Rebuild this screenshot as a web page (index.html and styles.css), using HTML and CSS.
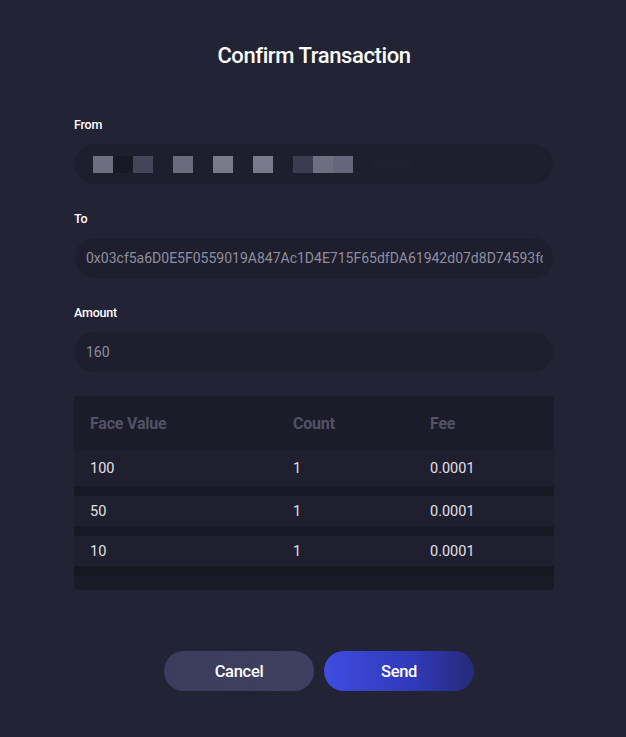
FILE: index.html
```html
<!DOCTYPE html>
<html>
<head>
<meta charset="utf-8">
<link rel="stylesheet" href="styles.css">
</head>
<body>
<div class="dialog">
  <h1 class="title">Confirm Transaction</h1>
  <div class="field">
    <div class="label">From</div>
    <div class="input blurred">
      <span class="px" style="background:#6e6e80;width:20px"></span><span class="px" style="background:#191926;width:20px"></span><span class="px" style="background:#45455a;width:20px"></span><span class="gap" style="width:20px"></span><span class="px" style="background:#6a6a7c;width:20px"></span><span class="gap" style="width:20px"></span><span class="px" style="background:#7a7a8c;width:20px"></span><span class="gap" style="width:20px"></span><span class="px" style="background:#7a7a8c;width:20px"></span><span class="gap" style="width:20px"></span><span class="px" style="background:#3c3c50;width:20px"></span><span class="px" style="background:#6e6e80;width:20px"></span><span class="px" style="background:#66667a;width:20px"></span><span class="gap" style="width:20px"></span><span class="px" style="background:#1f1f2e;width:40px"></span>
    </div>
  </div>
  <div class="field">
    <div class="label">To</div>
    <div class="input"><span class="value">0x03cf5a6D0E5F0559019A847Ac1D4E715F65dfDA61942d07d8D74593fd2</span></div>
  </div>
  <div class="field">
    <div class="label">Amount</div>
    <div class="input"><span class="value">160</span></div>
  </div>
  <div class="table">
    <div class="row head">
      <div class="c1">Face Value</div><div class="c2">Count</div><div class="c3">Fee</div>
    </div>
    <div class="row first">
      <div class="c1">100</div><div class="c2">1</div><div class="c3">0.0001</div>
    </div>
    <div class="row">
      <div class="c1">50</div><div class="c2">1</div><div class="c3">0.0001</div>
    </div>
    <div class="row">
      <div class="c1">10</div><div class="c2">1</div><div class="c3">0.0001</div>
    </div>
    <div class="foot"></div>
  </div>
  <div class="actions">
    <button class="btn cancel">Cancel</button>
    <button class="btn send">Send</button>
  </div>
</div>
</body>
</html>
```
FILE: styles.css
```css
html, body {
  margin: 0;
  padding: 0;
  background: #232336;
  height: 100%;
}
body {
  font-family: Roboto, "Liberation Sans", sans-serif;
  color: #ffffff;
}
.dialog {
  width: 480px;
  margin-left: 74px;
  padding-top: 41px;
  display: flex;
  flex-direction: column;
}
.title {
  margin: 0;
  font-size: 22px;
  font-weight: 500;
  text-align: center;
  line-height: 30px;
  letter-spacing: -0.4px;
}
.field {
  display: flex;
  flex-direction: column;
}
.field:first-of-type { margin-top: 46px; }
.field + .field { margin-top: 27px; }
.label {
  font-size: 12.5px;
  font-weight: 500;
  line-height: 16px;
  letter-spacing: -0.2px;
}
.input {
  margin-top: 11px;
  margin-left: 1px;
  width: 478px;
  height: 40px;
  border-radius: 20px;
  background: #1e1e2e;
  display: flex;
  align-items: center;
  padding: 0 10px 0 11px;
  box-sizing: border-box;
  overflow: hidden;
}
.value {
  color: #8e8e9e;
  font-size: 14px;
  white-space: nowrap;
  overflow: hidden;
  text-overflow: clip;
  min-width: 0;
}
.blurred { padding-left: 18px; }
.px { display: inline-block; height: 17px; flex: none; }
.gap { display: inline-block; height: 17px; flex: none; }
.table {
  margin-top: 24px;
  width: 480px;
  background: #191926;
  border-radius: 4px;
  overflow: hidden;
  display: flex;
  flex-direction: column;
}
.row {
  display: flex;
  align-items: center;
  height: 30px;
  background: #1f1f30;
  margin-top: 10px;
  font-size: 14.5px;
  color: #e0e0e8;
}
.row.first { margin-top: 0; height: 35px; }
.row.head {
  height: 55px;
  margin-top: 0;
  background: #1b1b29;
  color: #525266;
  font-size: 16px;
  font-weight: 700;
  letter-spacing: -0.2px;
}
.c1 { width: 203px; padding-left: 16px; }
.c2 { width: 137px; }
.c3 { flex: 1; }
.foot {
  height: 14px;
  border-top: 10px solid #181823;
  background: #1b1b28;
}
.actions {
  margin-top: 61px;
  display: flex;
  justify-content: center;
  gap: 10px;
  padding-left: 10px;
}
.btn {
  width: 150px;
  height: 40px;
  border: none;
  border-radius: 20px;
  color: #ffffff;
  font-family: Roboto, "Liberation Sans", sans-serif;
  font-size: 16.5px;
  font-weight: 500;
  letter-spacing: -0.3px;
  padding: 0;
}
.cancel {
  background: linear-gradient(90deg, #3c3d5e 0%, #3f4060 100%);
}
.send {
  background: linear-gradient(90deg, #3f4ce0 0%, #3039b8 60%, #262a78 100%);
}
```
